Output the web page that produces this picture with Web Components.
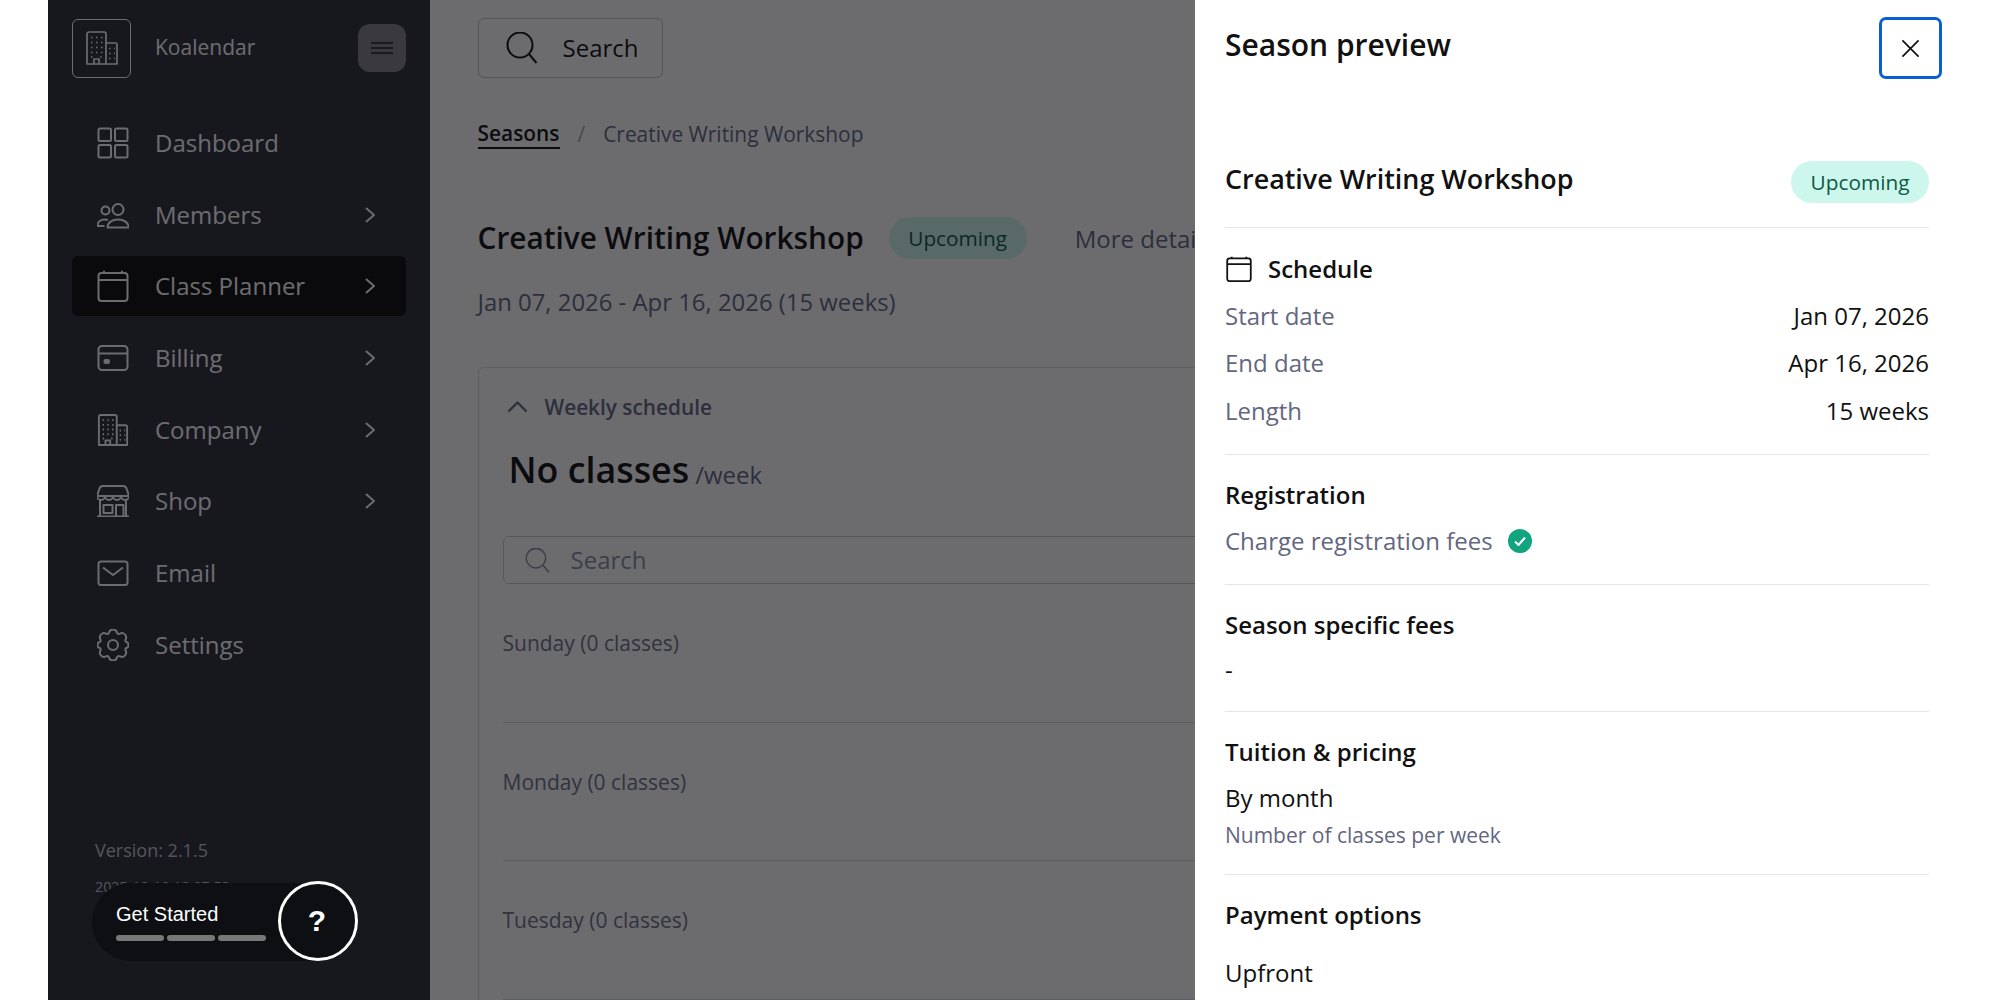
<!DOCTYPE html>
<html lang="en">
<head>
<meta charset="utf-8">
<title>Season preview</title>
<style>
html,body{margin:0;padding:0;background:#fff;overflow:hidden}
body{font-family:"Open Sans","Noto Sans",sans-serif;color:#111}
</style>
</head>
<body>
<koa-app></koa-app>
<script>
const ICONS={
 dashboard:'<svg viewBox="0 0 32 32"><rect x="1.5" y="1.5" width="12.5" height="12.5" rx="1.5"/><rect x="18" y="1.5" width="12.5" height="12.5" rx="1.5"/><rect x="1.5" y="18" width="12.5" height="12.5" rx="1.5"/><rect x="18" y="18" width="12.5" height="12.5" rx="1.5"/></svg>',
 members:'<svg viewBox="0 0 32 32"><circle cx="8.5" cy="11.5" r="4"/><circle cx="21" cy="10.5" r="5.5"/><path d="M10.5 28.5c0-5 4.800-8 10.500-8s10.700 3 10.700 8z"/><path d="M7.500 27H.5c0-4.200 3-6.500 7-6.500 1.300 0 2.400.2 3.300.7"/></svg>',
 calendar:'<svg viewBox="0 0 32 32"><rect x="1.500" y="3" width="29" height="28" rx="3"/><path d="M1.500 10h29M7 3V.8M25 3V.8"/></svg>',
 billing:'<svg viewBox="0 0 32 32"><rect x="1.500" y="4" width="29" height="24" rx="3.500"/><path d="M1.500 11.500h29"/><rect x="6.500" y="17" width="6.500" height="5" rx="2" fill="currentColor" stroke="none"/></svg>',
 building:'<svg viewBox="0 0 32 34"><path d="M1 33V3a2 2 0 0 1 2-2h15a2 2 0 0 1 2 2v30zM20 12h9.500a1.500 1.500 0 0 1 1.500 1.500V33H20M8 33v-5h5v5"/><path stroke-dasharray="1.500 3.500" d="M5 6.500h12M5 11.500h12M5 16.500h12M5 21.500h12M5 26h2M14 26h3M23 17.500h6M23 22.500h6M23 27.500h6"/></svg>',
 shop:'<svg viewBox="0 0 32 32"><path d="M6 1h20c2 0 3 1 3.500 2.500L32 11c0 2.200-1.800 4-4 4s-4-1.800-4-4c0 2.200-1.800 4-4 4s-4-1.800-4-4c0 2.200-1.800 4-4 4s-4-1.800-4-4c0 2.200-1.800 4-4 4s-4-1.800-4-4l2.500-7.500C3 2 4 1 6 1zM.5 11h31"/><path d="M3 15v16M29 15v16M0 31.500h32M6.500 20h9v8h-9zM19 31V20h7.500v11"/></svg>',
 email:'<svg viewBox="0 0 32 32"><rect x="1.500" y="4.500" width="29" height="23.500" rx="2.500"/><path d="M6 10.500l10 7.500 10-7.500"/></svg>',
 settings:'<svg viewBox="0 0 32 32"><path d="M20 3.500c-.500-2-1.500-3-4-3s-3.500 1-4 3c-.300 1.300-1.700 1.900-2.900 1.200-1.800-1-3.200-1.100-5 .700S2.400 8.600 3.400 10.400c.7 1.200.1 2.600-1.200 2.900-1.200.4-1.700 1-1.700 2.700s.5 2.300 1.700 2.700c1.300.3 1.900 1.700 1.200 2.900-1 1.800-1.100 3.200.7 5s3.200 1.700 5 .7c1.200-.7 2.600-.1 2.900 1.200.5 2 1.500 3 4 3s3.500-1 4-3c.3-1.300 1.700-1.900 2.900-1.200 1.800 1 3.200 1.100 5-.7s1.700-3.200.7-5c-.7-1.200-.1-2.600 1.200-2.900 1.200-.4 1.700-1 1.700-2.700s-.5-2.300-1.700-2.700c-1.300-.3-1.900-1.700-1.200-2.900 1-1.800 1.100-3.200-.7-5s-3.200-1.700-5-.7C21.700 5.400 20.300 4.800 20 3.500z"/><circle cx="16" cy="16" r="5"/></svg>',
 chevron:'<svg viewBox="0 0 10 16"><path d="M1 1l8 7-8 7"/></svg>',
 up:'<svg viewBox="0 0 21 12"><path d="M1.500 10.500l9-9 9 9"/></svg>',
 search:'<svg viewBox="0 0 32 32"><circle cx="14" cy="13" r="12.500"/><path d="M23 22l7.500 9"/></svg>',
 close:'<svg viewBox="0 0 20 20"><path d="M1.500 1.500l17 17M18.500 1.500l-17 17"/></svg>',
 menu:'<svg viewBox="0 0 22 12"><path d="M0 1h22M0 6h22M0 11h22"/></svg>',
 check:'<svg viewBox="0 0 24 24"><circle cx="12" cy="12" r="12" fill="#12a37f" stroke="none"/><path d="M7 12.500l3.500 3.500 6.500-7.500" stroke="#fff"/></svg>'
};
function define(tag,css,html,setup){
  customElements.define(tag,class extends HTMLElement{
    constructor(){super();const r=this.attachShadow({mode:'open'});
      r.innerHTML='<style>'+css+'</style>'+(typeof html==='function'?html(this):html);}
    connectedCallback(){
      if(setup)setup(this);
      const r=this.shadowRoot;
      const h=typeof html==='function'?html(this):null;
      if(h!==null){r.innerHTML='<style>'+css+'</style>'+h;}
    }
  });
}
define('koa-icon',
 ':host{display:inline-flex;flex:none;color:inherit} svg{display:block;width:100%;height:100%;fill:none;stroke:currentColor;stroke-width:var(--sw,2);stroke-linejoin:round}',
 h=>ICONS[h.getAttribute('name')]||'');

define('koa-badge',
 ':host{display:inline-flex;align-items:center;justify-content:center;height:42px;width:138px;flex:none;border-radius:21px;background:#cdf7ec;color:#0c5a46;font-size:20.800px}',
 '<slot></slot>');

define('koa-nav-item',
 `:host{display:flex;align-items:center;height:60px;padding-left:25px;border-radius:6px;font-size:24px;line-height:30px;color:#fff;box-sizing:border-box}
  :host([active]){background:#0a0a08}
  .ic{width:32px;height:32px}
  .l{margin-left:26px;flex:1}
  .c{width:10px;height:16px;margin-right:31px}`,
 h=>`<koa-icon class="ic" name="${h.getAttribute('icon')}"></koa-icon><span class="l"><slot></slot></span>${h.hasAttribute('more')?'<koa-icon class="c" name="chevron"></koa-icon>':''}`);

define('koa-sidebar',
 `:host{display:flex;flex-direction:column;width:382px;height:1000px;background:#2b2c36;color:#fff;box-sizing:border-box;padding:18px 24px 0;flex:none}
  .head{display:flex;align-items:center;height:60px}
  .logo{width:59px;height:59px;box-sizing:border-box;border:1.500px solid #fff;border-radius:6px;display:flex;align-items:center;justify-content:center;flex:none}
  .logo koa-icon{width:32px;height:34px;--sw:1.700}
  .name{margin-left:24px;flex:1;font-size:21px;margin-top:-2px}
  .menu{width:48px;height:48px;border-radius:12px;background:#808186;display:flex;align-items:center;justify-content:center;color:#16181f}
  .menu koa-icon{width:22px;height:12px;--sw:1.500}
  nav{display:flex;flex-direction:column;gap:11.670px;margin-top:35px}
  .foot{margin-top:auto;padding:0 0 103px 23px;font-size:18px;line-height:24px;color:#c4c5cc}
  .foot div+div{font-size:14.300px;margin-top:15px;line-height:20px}`,
 `<div class="head"><div class="logo"><koa-icon name="building"></koa-icon></div><div class="name">Koalendar</div><div class="menu"><koa-icon name="menu"></koa-icon></div></div>
  <nav>
   <koa-nav-item icon="dashboard">Dashboard</koa-nav-item>
   <koa-nav-item icon="members" more>Members</koa-nav-item>
   <koa-nav-item icon="calendar" more active>Class Planner</koa-nav-item>
   <koa-nav-item icon="billing" more>Billing</koa-nav-item>
   <koa-nav-item icon="building" more>Company</koa-nav-item>
   <koa-nav-item icon="shop" more>Shop</koa-nav-item>
   <koa-nav-item icon="email">Email</koa-nav-item>
   <koa-nav-item icon="settings">Settings</koa-nav-item>
  </nav>
  <div class="foot"><div>Version: 2.1.5</div><div>2025-10-10 12:07:53</div></div>`);

define('koa-day-row',
 `:host{display:block;padding:44px 0 63.500px;border-bottom:1.500px solid #d9dae3;font-size:21px;line-height:30px;color:#6e7084}`,
 '<slot></slot>');

define('koa-main',
 `:host{display:block;flex:1;min-width:0;height:1000px;overflow:hidden;background:#fff;padding:18px 0 0 47.500px;box-sizing:border-box;color:#111}
  .sbtn{display:flex;align-items:center;width:185px;height:60px;box-sizing:border-box;border:1.500px solid #bfc0cc;border-radius:6px;padding-left:27px;font-size:24px;line-height:30px}
  .sbtn span{margin-top:-1px}
  .sbtn koa-icon{width:32px;height:32px;margin-right:25px}
  .crumb{display:flex;align-items:center;margin-top:38px;height:36px;font-size:20.900px;color:#63667f}
  .crumb b{font-weight:600;color:#111;border-bottom:2px solid #111;line-height:27px;height:27px;margin-top:1px}
  .crumb i{font-style:normal;margin:0 18px 0 18px;color:#a5a6b4}
  .title{display:flex;align-items:center;margin-top:65px;height:42px;white-space:nowrap}
  h1{margin:0;font-size:29.800px;font-weight:600;line-height:42px}
  .title koa-badge{margin-left:25px}
  .more{margin-left:48px;font-size:24px;color:#63667f}
  .date{margin-top:25px;font-size:23.900px;line-height:36px;color:#63667f}
  .card{margin-top:47px;width:1500px;height:700px;box-sizing:border-box;border:1.500px solid #d9dae3;border-radius:6px;padding:23px 0 0 24px}
  .ch{display:flex;align-items:center;height:32px;font-size:20.800px;font-weight:600;color:#63667f}
  .ch koa-icon{width:21px;height:12px;margin:0 17px 0 4px;--sw:2.400}
  .num{margin:21px 0 0 6px;height:51px;font-size:35.800px;font-weight:600;line-height:50px;white-space:nowrap}
  .num span{font-size:24px;font-weight:400;color:#63667f;margin-left:6px;vertical-align:-1px}
  .field{display:flex;align-items:center;margin-top:41px;height:48px;width:1200px;box-sizing:border-box;border:1.500px solid #c9cad5;border-radius:6px;padding-left:21px;font-size:24px;line-height:30px;color:#8a8ca3}
  .field span{margin-top:-1px}
  .field koa-icon{width:25px;height:25px;margin-right:21px}`,
 `<div class="sbtn"><koa-icon name="search"></koa-icon><span>Search</span></div>
  <div class="crumb"><b>Seasons</b><i>/</i>Creative Writing Workshop</div>
  <div class="title"><h1>Creative Writing Workshop</h1><koa-badge>Upcoming</koa-badge><span class="more">More details</span></div>
  <div class="date">Jan 07, 2026 - Apr 16, 2026 (15 weeks)</div>
  <div class="card">
    <div class="ch"><koa-icon name="up"></koa-icon>Weekly schedule</div>
    <div class="num">No classes<span>/week</span></div>
    <div class="field"><koa-icon name="search"></koa-icon><span>Search</span></div>
    <koa-day-row>Sunday (0 classes)</koa-day-row>
    <koa-day-row>Monday (0 classes)</koa-day-row>
    <koa-day-row>Tuesday (0 classes)</koa-day-row>
  </div>`);

define('koa-info-row',
 `:host{display:flex;justify-content:space-between;font-size:24px;line-height:30px;color:#63667f}
  .v{color:#111}`,
 h=>`<span>${h.getAttribute('label')}</span><span class="v"><slot></slot></span>`);

define('koa-section',
 `:host{display:block;border-bottom:1.500px solid #e3e5ee;padding:25px 0 27px;box-sizing:border-box}
  :host(:last-child){border-bottom:0}
  ::slotted(*){display:flex}
  .h{display:flex;align-items:center;font-size:24px;font-weight:600;line-height:30px;color:#111;white-space:nowrap}`,
 h=>`<div class="h"><slot name="icon"></slot>${h.getAttribute('heading')}</div><slot></slot>`);

define('koa-drawer',
 `:host{position:absolute;top:0;bottom:0;left:1194.700px;right:0;background:#fff;padding:0 71px 0 30.300px;box-sizing:border-box;overflow:hidden;color:#111}
  .top{display:flex;justify-content:space-between;align-items:flex-start;padding-top:17px;margin-right:-13px}
  h2{margin:9px 0 0;font-size:30px;font-weight:600;line-height:38px}
  .x{width:63px;height:62px;box-sizing:border-box;border:3px solid #0a5fd0;border-radius:7px;display:flex;align-items:center;justify-content:center}
  .x koa-icon{width:19px;height:19px;--sw:1.800}
  .sum{display:flex;justify-content:space-between;margin-top:82px;height:42px;padding-bottom:24px;border-bottom:1.500px solid #e3e5ee}
  h3{margin:0;font-size:26.900px;font-weight:600;line-height:36px}`,
 `<div class="top"><h2>Season preview</h2><div class="x"><koa-icon name="close"></koa-icon></div></div>
  <div class="sum"><h3>Creative Writing Workshop</h3><koa-badge>Upcoming</koa-badge></div>
  <slot></slot>`);

define('koa-help-pill',
 `:host{position:absolute;left:92px;top:883px;width:266px;height:78px;border-radius:39px;background:#0e0f12;color:#fff;font-family:"Liberation Sans",Arial,sans-serif;display:flex;align-items:center;box-sizing:border-box;padding-left:24px}
  .t{font-size:20px;line-height:22px}
  .bars{display:flex;gap:3px;margin-top:10px}
  .bars i{display:block;width:48px;height:6px;border-radius:3px;background:#777}
  .q{position:absolute;right:0;top:-2px;width:80px;height:80px;border:3px solid #fff;border-radius:50%;box-sizing:border-box;background:#0e0f12;display:flex;align-items:center;justify-content:center;font-weight:700;font-size:30px;padding-right:2px}`,
 `<div><div class="t">Get Started</div><div class="bars"><i></i><i></i><i></i></div></div><div class="q">?</div>`);

define('koa-app',
 `:host{display:block;position:relative;width:2000px;height:1000px;overflow:hidden;background:#fff}
  .wrap{display:flex;height:1000px;padding-left:48px;box-sizing:border-box}
  .veil{position:absolute;inset:0 0 0 48px;background:rgba(10,10,15,.6)}
  koa-icon.cal{width:26px;height:26px;margin:0 16px 0 1px;--sw:2.200;color:#111}
  .tight{margin-top:17.500px}
  .first{margin-top:16.500px}
  .txt{font-size:24px;line-height:30px;color:#111}
  .mut{color:#63667f;display:flex;align-items:center}
  .mut koa-icon{width:24px;height:24px;margin-left:15px}
  .sub{font-size:21px;line-height:28px;color:#63667f;margin-top:8px}`,
 `<div class="wrap"><koa-sidebar></koa-sidebar><koa-main></koa-main></div>
  <div class="veil"></div>
  <koa-help-pill></koa-help-pill>
  <koa-drawer>
    <koa-section heading="Schedule" style="padding-top:26px;padding-bottom:26px">
      <koa-icon slot="icon" class="cal" name="calendar"></koa-icon>
      <div style="display:block;padding-bottom:2px">
      <koa-info-row class="first" label="Start date">Jan 07, 2026</koa-info-row>
      <koa-info-row class="tight" label="End date">Apr 16, 2026</koa-info-row>
      <koa-info-row class="tight" label="Length">15 weeks</koa-info-row>
      </div>
    </koa-section>
    <koa-section heading="Registration" style="padding-bottom:28px">
      <div class="txt mut first">Charge registration fees<koa-icon name="check"></koa-icon></div>
    </koa-section>
    <koa-section heading="Season specific fees" style="padding-top:25px;padding-bottom:26px">
      <div class="txt" style="margin-top:15px">-</div>
    </koa-section>
    <koa-section heading="Tuition &amp; pricing" style="padding-top:25px;padding-bottom:25px">
      <div style="display:block"><div class="txt" style="margin-top:16px">By month</div><div class="sub">Number of classes per week</div></div>
    </koa-section>
    <koa-section heading="Payment options" style="padding-top:25px">
      <div class="txt" style="margin-top:28px">Upfront</div>
    </koa-section>
  </koa-drawer>`);
</script>
</body>
</html>
